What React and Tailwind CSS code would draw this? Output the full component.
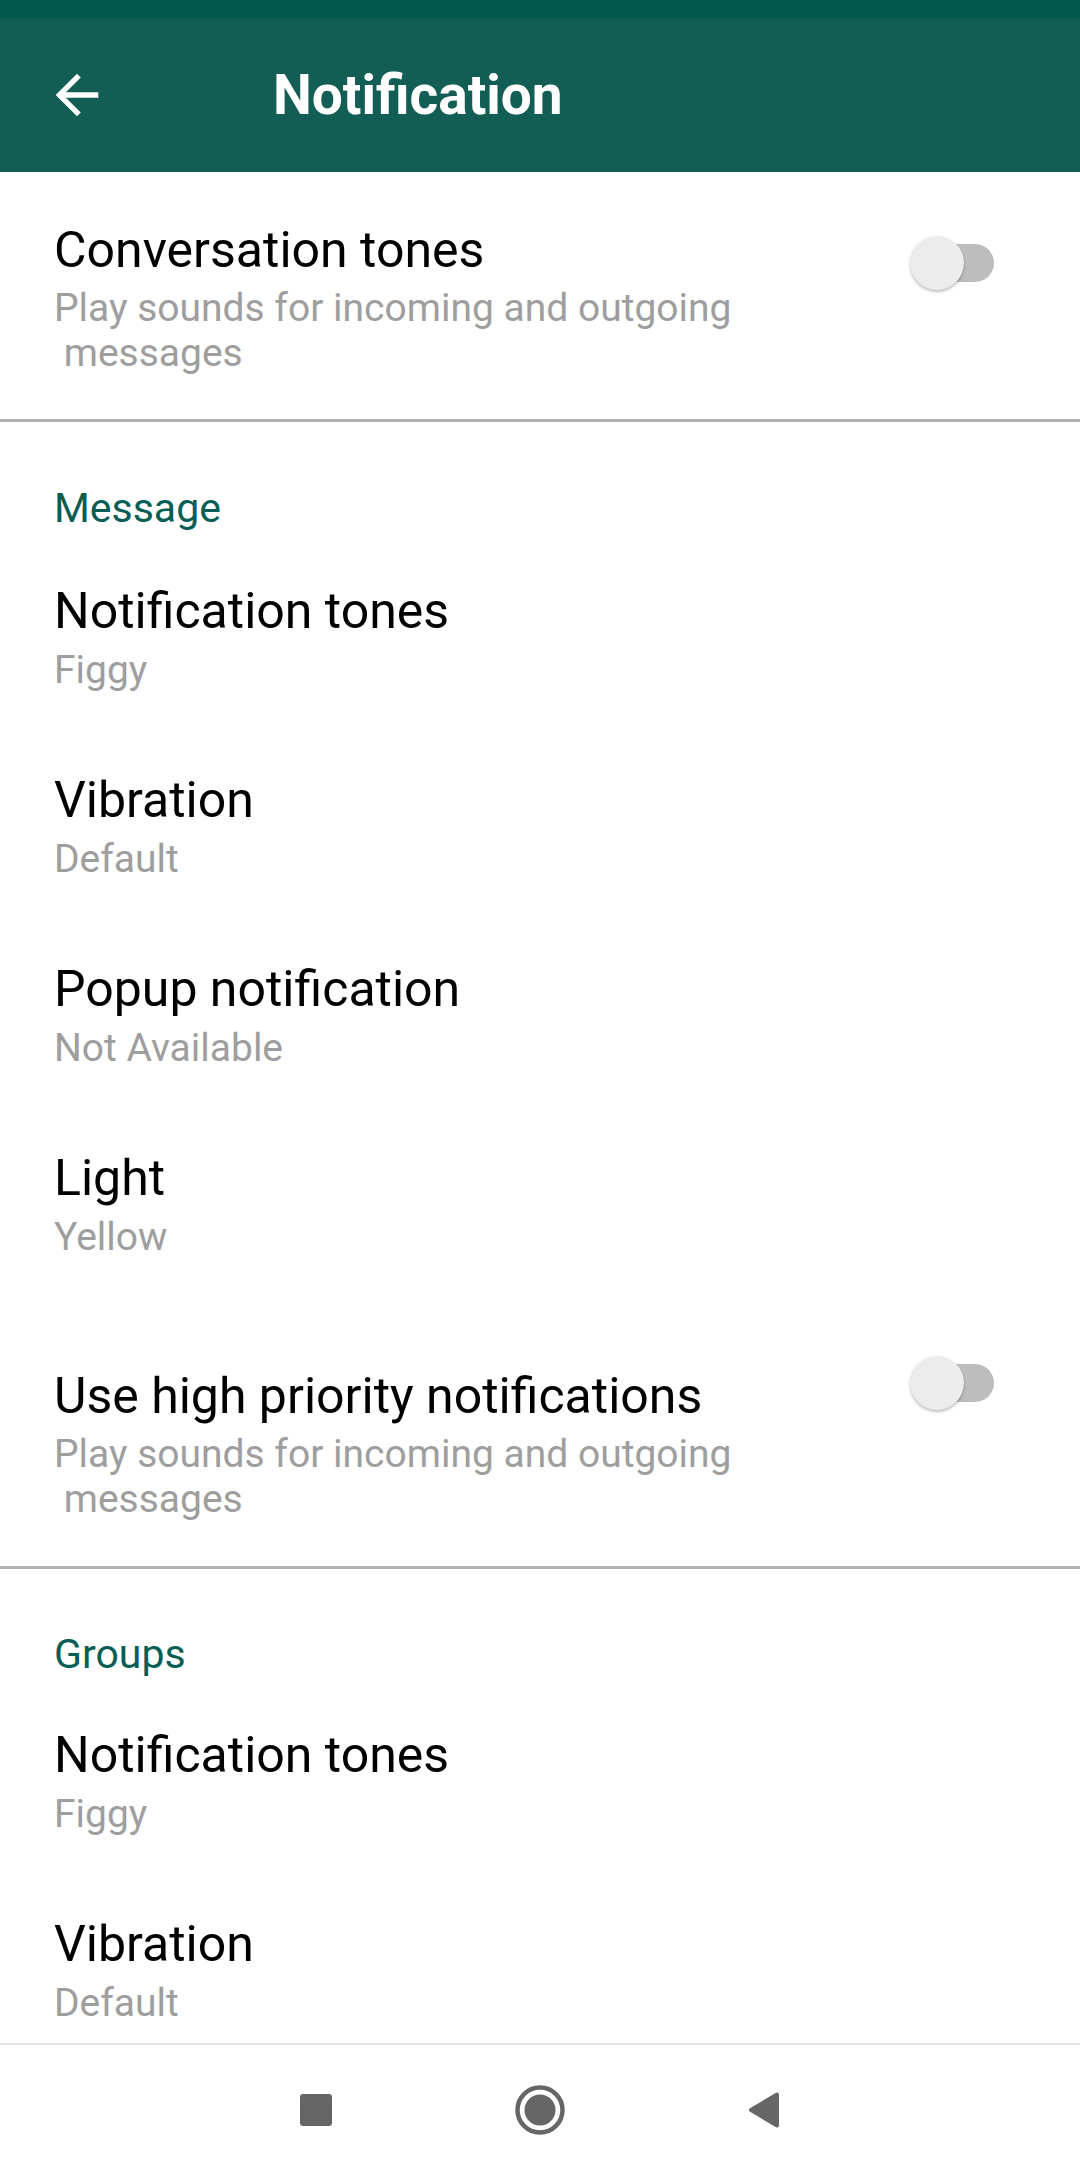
import React from "react";

const font = { fontFamily: "Roboto, 'Noto Sans', Arial, sans-serif" };

function Toggle({ className }) {
  return (
    <div className={`relative w-[92px] h-[54px] shrink-0 ${className}`}>
      <div className="absolute left-[14px] right-0 top-[8px] h-[38px] rounded-full bg-[#bdbdbd]" />
      <div className="absolute left-[8px] top-0 w-[54px] h-[54px] rounded-full bg-[#ececec] shadow-[0_2px_3px_rgba(0,0,0,0.25)]" />
    </div>
  );
}

function Row({ title, sub }) {
  return (
    <div className="pl-[54px] pt-[40px] pb-[39px]">
      <div className="text-[50px] leading-[56px] text-black">{title}</div>
      <div className="mt-[9px] text-[39px] leading-[45px] text-[#9e9e9e]">{sub}</div>
    </div>
  );
}

function SwitchRow({ title, padTop, toggleTop, padBottom }) {
  return (
    <div className="flex items-start justify-between pr-[86px]">
      <div className="pl-[54px]" style={{ paddingTop: padTop, paddingBottom: padBottom }}>
        <div className="text-[50px] leading-[56px] text-black">{title}</div>
        <div className="mt-[8px] text-[39px] leading-[45px] text-[#9e9e9e] whitespace-pre">
          {"Play sounds for incoming and outgoing\n messages"}
        </div>
      </div>
      <Toggle className={toggleTop} />
    </div>
  );
}

function SectionHeader({ label, pt, pb }) {
  return (
    <div className={`pl-[54px] text-[41px] leading-[45px] text-[#075e54] ${pt} ${pb}`}>{label}</div>
  );
}

export default function App() {
  return (
    <div className="w-[1080px] h-[2175px] flex flex-col bg-white overflow-hidden" style={font}>
      <div className="h-[18px] bg-[#00574b]" />
      <div className="h-[154px] bg-[#125e55] flex items-center pl-[45px]">
        <svg width="64" height="64" viewBox="0 0 24 24" fill="#ffffff">
          <path d="M20 11H7.83l5.59-5.59L12 4l-8 8 8 8 1.41-1.41L7.83 13H20v-2z" />
        </svg>
        <div className="ml-[164px] text-[55px] font-bold text-white leading-none">Notification</div>
      </div>

      <div className="flex-1 overflow-hidden">
        <SwitchRow title="Conversation tones" padTop={50} padBottom={43} toggleTop="mt-[64px]" />
        <div className="h-[3px] bg-[#b0b0b0]" />

        <SectionHeader label="Message" pt="pt-[64px]" pb="pb-[12px]" />
        <Row title="Notification tones" sub="Figgy" />
        <Row title="Vibration" sub="Default" />
        <Row title="Popup notification" sub="Not Available" />
        <Row title="Light" sub="Yellow" />
        <SwitchRow title="Use high priority notifications" padTop={69} padBottom={44} toggleTop="mt-[57px]" />
        <div className="h-[3px] bg-[#b0b0b0]" />

        <SectionHeader label="Groups" pt="pt-[63px]" pb="pb-[10px]" />
        <Row title="Notification tones" sub="Figgy" />
        <Row title="Vibration" sub="Default" />
      </div>

      <div className="h-[132px] shrink-0 border-t-2 border-[#e8e8e8] bg-white flex items-center justify-center">
        <div className="w-[224px] flex justify-center">
          <div className="w-[32px] h-[32px] rounded-[3px] bg-[#666666]" />
        </div>
        <div className="w-[224px] flex justify-center">
          <svg width="50" height="50" viewBox="0 0 50 50">
            <circle cx="25" cy="25" r="22.5" fill="none" stroke="#666666" strokeWidth="4.5" />
            <circle cx="25" cy="25" r="15.5" fill="#666666" />
          </svg>
        </div>
        <div className="w-[224px] flex justify-center">
          <svg width="34" height="40" viewBox="0 0 34 40">
            <polygon points="4,20 30,4.5 30,35.5" fill="#666666" stroke="#666666" strokeWidth="4" strokeLinejoin="round" />
          </svg>
        </div>
      </div>
    </div>
  );
}
